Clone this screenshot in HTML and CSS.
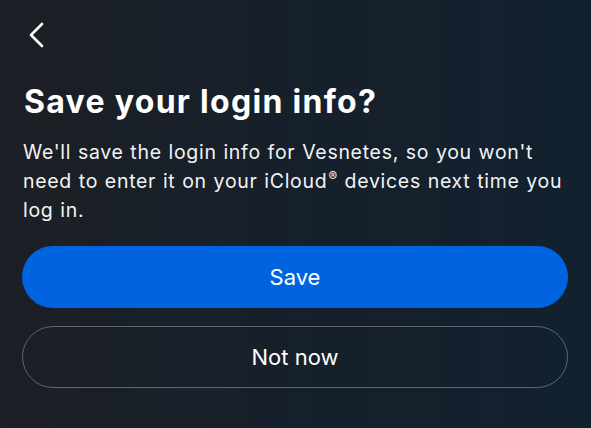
FILE: index.html
```html
<!DOCTYPE html>
<html>
<head>
<meta charset="utf-8">
<link rel="stylesheet" href="styles.css">
</head>
<body>
<div class="screen">
  <button class="back" aria-label="Back">
    <svg width="18" height="26" viewBox="0 0 18 26"><path d="M15 2 L4 13 L15 24" fill="none" stroke="#fff" stroke-width="2.6" stroke-linecap="round" stroke-linejoin="round"/></svg>
  </button>
  <h1 class="title">Save your login info?</h1>
  <p class="desc">We'll save the login info for Vesnetes, so you won't need to enter it on your iCloud<span class="reg">®</span> devices next time you log in.</p>
  <div class="actions">
    <button class="btn primary">Save</button>
    <button class="btn secondary">Not now</button>
  </div>
</div>
</body>
</html>
```
FILE: styles.css
```css
html, body { margin: 0; padding: 0; }
body {
  width: 591px;
  height: 428px;
  overflow: hidden;
  background: linear-gradient(90deg, #1c1f25 0%, #17202a 45%, #12212f 100%);
  font-family: "Inter", "Roboto", sans-serif;
  color: #fff;
}
.screen {
  display: flex;
  flex-direction: column;
  padding: 22px 23px 0 23px;
}
.back {
  background: none;
  border: none;
  padding: 0;
  margin: 0 0 0 4px;
  width: 18px;
  height: 26px;
  display: block;
}
.title {
  margin: 34px 0 0 1px;
  font-size: 32px;
  font-weight: 700;
  line-height: 40px;
  letter-spacing: 1.3px;
}
.desc {
  margin: 16px 0 0 0;
  font-size: 19.5px;
  line-height: 29px;
  font-weight: 400;
  letter-spacing: 0.7px;
  word-spacing: 0.6px;
  color: #f2f3f5;
  max-width: 548px;
}
.reg {
  font-size: 13px;
  line-height: 0;
  vertical-align: 7px;
  margin-left: 1px;
}
.actions {
  display: flex;
  flex-direction: column;
  gap: 18px;
  margin-top: 21px;
  margin-left: -1px;
}
.btn {
  height: 62px;
  width: 546px;
  border-radius: 31px;
  font-family: inherit;
  font-size: 22px;
  color: #fff;
  cursor: pointer;
}
.primary {
  background: #0064e0;
  border: none;
}
.secondary {
  background: transparent;
  border: 1px solid #5d6671;
}
```
